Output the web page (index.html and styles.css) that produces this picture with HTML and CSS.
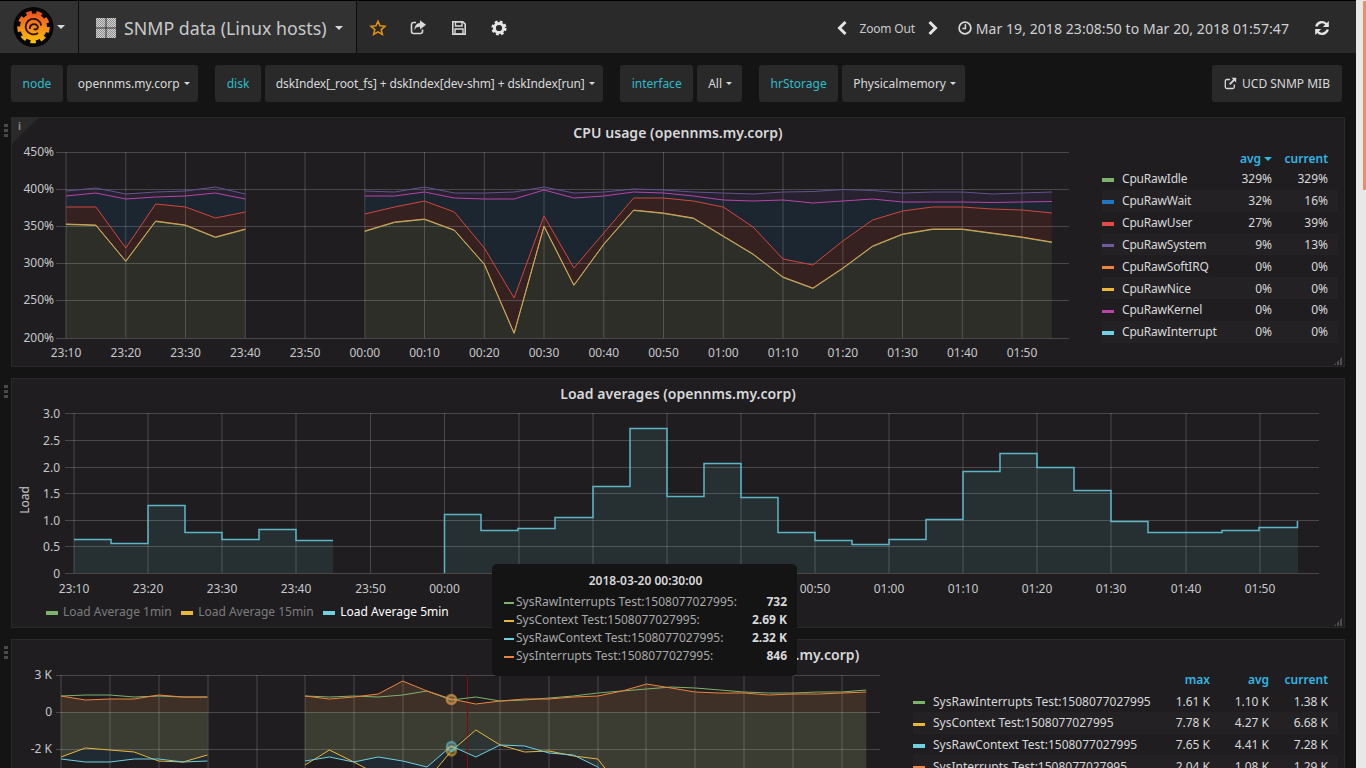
FILE: index.html
```html
<!DOCTYPE html>
<html lang="en">
<head>
<meta charset="utf-8">
<title>SNMP data (Linux hosts)</title>
<link rel="stylesheet" href="styles.css">
</head>
<body>
<div class="app">
<main class="main">
  <nav class="nav">
    <a class="nav-block logo-btn">
      <svg class="logo" width="42" height="42" viewBox="12 6 42 42">
        <defs><linearGradient id="lg" gradientUnits="userSpaceOnUse" x1="33" y1="11" x2="33" y2="43"><stop offset="0" stop-color="#ee4f22"/><stop offset="1" stop-color="#fcc30a"/></linearGradient></defs>
        <circle cx="33.500" cy="27" r="20" fill="#050505"/>
        <circle cx="33.500" cy="27" r="13.500" fill="url(#lg)"/>
        <circle cx="33.500" cy="27" r="14.500" fill="none" stroke="url(#lg)" stroke-width="3.500" stroke-dasharray="5.500 4.620"/>
        <path d="M38 33A7.800 7.800 0 1 1 41.200 25.500" fill="none" stroke="#2a1206" stroke-width="1.800"/>
        <path d="M29.800 29a4.300 4.300 0 0 1 7.800-3a2.400 2.400 0 0 1-3.800 2.800" fill="none" stroke="#2a1206" stroke-width="1.800"/>
      </svg>
      <span class="caret"></span>
    </a>
    <a class="nav-block title-btn">
      <svg class="grid-ico" width="20" height="20" viewBox="0 0 20 20">
        <defs><pattern id="hatch" width="2" height="2" patternUnits="userSpaceOnUse"><rect width="2" height="2" fill="#8f8f8f"/><path d="M0 2L2 0" stroke="#d8d8d8" stroke-width=".9"/></pattern></defs>
        <rect x="0" y="0" width="9.500" height="9.500" fill="url(#hatch)"/><rect x="10.500" y="0" width="9.500" height="9.500" fill="url(#hatch)"/><rect x="0" y="10.500" width="9.500" height="9.500" fill="url(#hatch)"/><rect x="10.500" y="10.500" width="9.500" height="9.500" fill="url(#hatch)"/>
      </svg>
      <span class="dash-title">SNMP data (Linux hosts)</span>
      <span class="caret"></span>
    </a>
    <a class="icon-btn"><svg class="star" width="18" height="18" viewBox="0 0 18 18"><path d="M9 2.200l2 4.600 5 .5-3.800 3.300 1.200 4.900L9 12.900l-4.400 2.600 1.200-4.900L2 7.300l5-.5z" fill="none" stroke="#e8920f" stroke-width="1.500" stroke-linejoin="miter"/></svg></a>
    <a class="icon-btn"><svg width="18" height="18" viewBox="0 0 18 18"><path d="M7 3.500H4.500A2 2 0 0 0 2.500 5.500v7a2 2 0 0 0 2 2h7a2 2 0 0 0 2-2v-2" fill="none" stroke="#d8d9da" stroke-width="1.600"/><path d="M11 1.200l6 4.600-6 4.600V7.800c-3 0-4.800 1-5.500 3.700C5.300 7 7.500 4 11 3.900z" fill="#d8d9da"/></svg></a>
    <a class="icon-btn"><svg width="18" height="18" viewBox="0 0 18 18"><path d="M2.800 2.800h10l2.400 2.400v10H2.800z" fill="none" stroke="#d8d9da" stroke-width="1.600"/><path d="M5.500 2.800h6.500v4.200H5.500z" fill="none" stroke="#d8d9da" stroke-width="1.400"/><path d="M5 10h8v5H5z" fill="none" stroke="#d8d9da" stroke-width="1.400"/></svg></a>
    <a class="icon-btn"><svg width="18" height="18" viewBox="0 0 18 18"><circle cx="9" cy="9" r="4.600" fill="none" stroke="#e6e6e6" stroke-width="3"/><circle cx="9" cy="9" r="6.400" fill="none" stroke="#e6e6e6" stroke-width="2.400" stroke-dasharray="2.800 2.230"/></svg></a>
    <div class="nav-right">
      <svg class="chev" width="12" height="16" viewBox="0 0 12 16"><path d="M9.500 2L3.500 8l6 6" fill="none" stroke="#e3e4e5" stroke-width="3"/></svg>
      <span class="zoom-out">Zoom Out</span>
      <svg class="chev" width="12" height="16" viewBox="0 0 12 16"><path d="M2.500 2l6 6-6 6" fill="none" stroke="#e3e4e5" stroke-width="3"/></svg>
      <svg class="clock" width="14" height="14" viewBox="0 0 14 14"><circle cx="7" cy="7" r="5.900" fill="none" stroke="#d8d9da" stroke-width="1.700"/><path d="M7.400 3.300V7.600H4.400" fill="none" stroke="#d8d9da" stroke-width="1.500"/></svg>
      <span class="range">Mar 19, 2018 23:08:50 to Mar 20, 2018 01:57:47</span>
      <svg class="refresh" width="16" height="16" viewBox="0 0 16 16"><path d="M2.300 6.500A5.900 5.900 0 0 1 12.500 4.200" fill="none" stroke="#e3e4e5" stroke-width="2.400"/><path d="M14.800 1v6h-6z" fill="#e3e4e5"/><path d="M13.700 9.500A5.900 5.900 0 0 1 3.500 11.800" fill="none" stroke="#e3e4e5" stroke-width="2.400"/><path d="M1.200 15V9h6z" fill="#e3e4e5"/></svg>
    </div>
  </nav>

  <div class="vars">
    <div class="var-group"><span class="var-label">node</span><span class="var-value">opennms.my.corp<i class="caret small"></i></span></div>
    <div class="var-group"><span class="var-label">disk</span><span class="var-value tight">dskIndex[_root_fs] + dskIndex[dev-shm] + dskIndex[run]<i class="caret small"></i></span></div>
    <div class="var-group"><span class="var-label">interface</span><span class="var-value roomy">All<i class="caret small"></i></span></div>
    <div class="var-group"><span class="var-label">hrStorage</span><span class="var-value roomy">Physicalmemory<i class="caret small"></i></span></div>
    <a class="var-link"><svg width="13" height="13" viewBox="0 0 13 13"><path d="M6 2.500H2.800A1.500 1.500 0 0 0 1.300 4v6a1.500 1.500 0 0 0 1.500 1.500h6A1.500 1.500 0 0 0 10.300 10V7.500" fill="none" stroke="#d8d9da" stroke-width="1.300"/><path d="M7.500 .8h4.700v4.700L10.500 3.800 6.300 8 5 6.700 9.200 2.500z" fill="#d8d9da"/></svg>UCD SNMP MIB</a>
  </div>

  <section class="panel">
    <i class="grip"></i><i class="info-corner"></i><i class="info-i">i</i>
    <h2 class="panel-title">CPU usage (opennms.my.corp)</h2>
    <div class="panel-body">
      <svg class="chart" width="1082" height="220" viewBox="12 146 1082 220">
        <g fill="#272130">
          <polygon points="66,191 95.900,188 125.800,194 155.600,192 185.500,191 215.400,187 245.300,194 245.300,338 66,338"/>
          <polygon points="364.800,191 394.600,192 424.500,187 454.400,193 484.300,193 514.100,192 544,187 573.900,193 603.800,192 633.600,189 663.500,190 693.400,192 723.300,193 753.100,194 783,192 812.900,191.500 842.800,189.500 872.600,190.500 902.500,193 932.400,192 962.300,192 992.100,194 1022,193 1051.900,192 1051.900,338 364.800,338"/>
        </g>
        <g fill="#1b2630">
          <polygon points="66,196 95.900,193 125.800,199 155.600,197 185.500,196 215.400,193 245.300,199 245.300,338 66,338"/>
          <polygon points="364.800,196 394.600,196 424.500,192 454.400,198 484.300,199 514.100,199 544,190 573.900,198 603.800,196 633.600,192 663.500,193 693.400,196 723.300,200 753.100,201 783,200 812.900,203 842.800,201 872.600,199 902.500,202 932.400,202 962.300,202 992.100,202.500 1022,202 1051.900,201.500 1051.900,338 364.800,338"/>
        </g>
        <g fill="#35211f">
          <polygon points="66,207 95.900,207 125.800,248 155.600,204 185.500,207 215.400,218 245.300,212 245.300,338 66,338"/>
          <polygon points="364.800,214 394.600,207 424.500,201 454.400,212 484.300,248 514.100,298 544,216 573.900,268 603.800,233 633.600,198 663.500,198 693.400,201 723.300,207 753.100,227 783,259 812.900,265 842.800,241 872.600,220 902.500,211 932.400,207 962.300,207 992.100,209 1022,210 1051.900,213 1051.900,338 364.800,338"/>
        </g>
        <g fill="#2c2e27">
          <polygon points="66,224 95.900,225 125.800,261 155.600,221 185.500,225 215.400,237 245.300,229 245.300,338 66,338"/>
          <polygon points="364.800,231 394.600,222 424.500,219 454.400,230 484.300,264 514.100,333 544,226 573.900,285 603.800,244 633.600,210 663.500,213 693.400,218 723.300,236 753.100,254 783,277 812.900,288 842.800,268 872.600,246 902.500,234 932.400,229 962.300,229 992.100,233 1022,237 1051.900,242 1051.900,338 364.800,338"/>
        </g>
        <path class="grid" d="M56 152.500H1069M56 189.500H1069M56 226.500H1069M56 263.500H1069M56 300.500H1069M56 338.500H1069M66 152V338M125.800 152V338M185.500 152V338M245.300 152V338M305 152V338M364.800 152V338M424.500 152V338M484.300 152V338M544 152V338M603.800 152V338M663.500 152V338M723.300 152V338M783 152V338M842.800 152V338M902.500 152V338M962.300 152V338M1022 152V338"/>
        <g class="line" stroke="#635390">
          <polyline points="66,191 95.900,188 125.800,194 155.600,192 185.500,191 215.400,187 245.300,194"/>
          <polyline points="364.800,191 394.600,192 424.500,187 454.400,193 484.300,193 514.100,192 544,187 573.900,193 603.800,192 633.600,189 663.500,190 693.400,192 723.300,193 753.100,194 783,192 812.900,191.500 842.800,189.500 872.600,190.500 902.500,193 932.400,192 962.300,192 992.100,194 1022,193 1051.900,192"/>
        </g>
        <g class="line" stroke="#ba43a9">
          <polyline points="66,196 95.900,193 125.800,199 155.600,197 185.500,196 215.400,193 245.300,199"/>
          <polyline points="364.800,196 394.600,196 424.500,192 454.400,198 484.300,199 514.100,199 544,190 573.900,198 603.800,196 633.600,192 663.500,193 693.400,196 723.300,200 753.100,201 783,200 812.900,203 842.800,201 872.600,199 902.500,202 932.400,202 962.300,202 992.100,202.500 1022,202 1051.900,201.500"/>
        </g>
        <g class="line" stroke="#d2473d">
          <polyline points="66,207 95.900,207 125.800,248 155.600,204 185.500,207 215.400,218 245.300,212"/>
          <polyline points="364.800,214 394.600,207 424.500,201 454.400,212 484.300,248 514.100,298 544,216 573.900,268 603.800,233 633.600,198 663.500,198 693.400,201 723.300,207 753.100,227 783,259 812.900,265 842.800,241 872.600,220 902.500,211 932.400,207 962.300,207 992.100,209 1022,210 1051.900,213"/>
        </g>
        <g class="line" stroke="#7eb26d">
          <polyline points="66,224.500 95.900,225.500 125.800,261.500 155.600,221.500 185.500,225.500 215.400,237.500 245.300,229.500"/>
          <polyline points="364.800,231.500 394.600,222.500 424.500,219.500 454.400,230.500 484.300,264.500 514.100,333.500 544,226.500 573.900,285.500 603.800,244.500 633.600,210.500 663.500,213.500 693.400,218.500 723.300,236.500 753.100,254.500 783,277.500 812.900,288.500 842.800,268.500 872.600,246.500 902.500,234.500 932.400,229.500 962.300,229.500 992.100,233.500 1022,237.500 1051.900,242.500"/>
        </g>
        <g class="line" stroke="#e39c50">
          <polyline points="66,224 95.900,225 125.800,261 155.600,221 185.500,225 215.400,237 245.300,229"/>
          <polyline points="364.800,231 394.600,222 424.500,219 454.400,230 484.300,264 514.100,333 544,226 573.900,285 603.800,244 633.600,210 663.500,213 693.400,218 723.300,236 753.100,254 783,277 812.900,288 842.800,268 872.600,246 902.500,234 932.400,229 962.300,229 992.100,233 1022,237 1051.900,242"/>
        </g>
        <g class="tick end">
          <text x="54" y="156">450%</text><text x="54" y="193">400%</text><text x="54" y="230">350%</text><text x="54" y="267">300%</text><text x="54" y="304">250%</text><text x="54" y="342">200%</text>
        </g>
        <g class="tick mid">
          <text x="66" y="357">23:10</text><text x="125.800" y="357">23:20</text><text x="185.500" y="357">23:30</text><text x="245.300" y="357">23:40</text><text x="305" y="357">23:50</text><text x="364.800" y="357">00:00</text><text x="424.500" y="357">00:10</text><text x="484.300" y="357">00:20</text><text x="544" y="357">00:30</text><text x="603.800" y="357">00:40</text><text x="663.500" y="357">00:50</text><text x="723.300" y="357">01:00</text><text x="783" y="357">01:10</text><text x="842.800" y="357">01:20</text><text x="902.500" y="357">01:30</text><text x="962.300" y="357">01:40</text><text x="1022" y="357">01:50</text>
        </g>
      </svg>
      <table class="legend legend-cpu">
        <thead><tr><th></th><th class="num">avg<i class="caret blue"></i></th><th class="num">current</th></tr></thead>
        <tbody>
          <tr><td><i class="dash c-green"></i>CpuRawIdle</td><td class="num">329%</td><td class="num">329%</td></tr>
          <tr><td><i class="dash c-blue"></i>CpuRawWait</td><td class="num">32%</td><td class="num">16%</td></tr>
          <tr><td><i class="dash c-red"></i>CpuRawUser</td><td class="num">27%</td><td class="num">39%</td></tr>
          <tr><td><i class="dash c-purple"></i>CpuRawSystem</td><td class="num">9%</td><td class="num">13%</td></tr>
          <tr><td><i class="dash c-orange"></i>CpuRawSoftIRQ</td><td class="num">0%</td><td class="num">0%</td></tr>
          <tr><td><i class="dash c-yellow"></i>CpuRawNice</td><td class="num">0%</td><td class="num">0%</td></tr>
          <tr><td><i class="dash c-magenta"></i>CpuRawKernel</td><td class="num">0%</td><td class="num">0%</td></tr>
          <tr><td><i class="dash c-cyan"></i>CpuRawInterrupt</td><td class="num">0%</td><td class="num">0%</td></tr>
        </tbody>
      </table>
    </div>
    <i class="resize"></i>
  </section>

  <section class="panel">
    <i class="grip"></i>
    <h2 class="panel-title">Load averages (opennms.my.corp)</h2>
    <svg class="chart" width="1332" height="190" viewBox="12 407 1332 190">
      <path fill="#263033" d="M74 539H111V543H148V505H185V532H222V539H259V529H296V540H333V573H74Z"/>
      <path fill="#263033" d="M444 573V514H481V530H518V528H555V517H593V486H630V428H667V496H704V463H741V497H778V532H815V540H852V544H889V539H926V519H963V471H1000V453H1037V467H1074V490H1111V521H1148V532H1222V530H1259V527H1296V521H1298V573Z"/>
      <path class="grid" d="M65 413.500H1319M65 440.500H1319M65 467.500H1319M65 493.500H1319M65 520.500H1319M65 546.500H1319M65 573.500H1319M74 413V573M148 413V573M222 413V573M296 413V573M370.500 413V573M444.500 413V573M519 413V573M593 413V573M667 413V573M741 413V573M815 413V573M889 413V573M963 413V573M1037 413V573M1111 413V573M1186 413V573M1260 413V573"/>
      <path class="line step" d="M74 539.500H111V543.500H148V505.500H185V532.500H222V539.500H259V529.500H296V540.500H333"/>
      <path class="line step" d="M444.500 573V514.500H481V530.500H518V528.500H555V517.500H593V486.500H630V428.500H667V496.500H704V463.500H741V497.500H778V532.500H815V540.500H852V544.500H889V539.500H926V519.500H963V471.500H1000V453.500H1037V467.500H1074V490.500H1111V521.500H1148V532.500H1222V530.500H1259V527.500H1297.500V521"/>
      <g class="tick end">
        <text x="60" y="418">3.0</text><text x="60" y="445">2.5</text><text x="60" y="472">2.0</text><text x="60" y="498">1.5</text><text x="60" y="525">1.0</text><text x="60" y="551">0.5</text><text x="60" y="578">0</text>
      </g>
      <g class="tick mid">
        <text x="74" y="593">23:10</text><text x="148" y="593">23:20</text><text x="222" y="593">23:30</text><text x="296" y="593">23:40</text><text x="370.500" y="593">23:50</text><text x="444.500" y="593">00:00</text><text x="815" y="593">00:50</text><text x="889" y="593">01:00</text><text x="963" y="593">01:10</text><text x="1037" y="593">01:20</text><text x="1111" y="593">01:30</text><text x="1186" y="593">01:40</text><text x="1260" y="593">01:50</text>
      </g>
      <text class="tick mid" transform="translate(29 500) rotate(-90)">Load</text>
    </svg>
    <div class="legend-row">
      <span class="legend-item dim"><i class="dash c-green"></i>Load Average 1min</span>
      <span class="legend-item dim"><i class="dash c-yellow"></i>Load Average 15min</span>
      <span class="legend-item"><i class="dash c-cyan"></i>Load Average 5min</span>
    </div>
    <i class="resize"></i>
  </section>

  <section class="panel">
    <i class="grip"></i>
    <h2 class="panel-title">Interrupts and context switching (opennms.my.corp)</h2>
    <div class="panel-body">
      <svg class="chart" width="882" height="220" viewBox="12 668 882 220">
        <g fill="#3e3026">
          <polygon points="61,696 85.400,700 109.800,699 134.200,699 158.600,695 183,697 207.400,697 207.400,712 61,712"/>
          <polygon points="305,696 329.400,699 353.800,697 378.200,694 402.600,681 427,691 451.400,699 475.800,704 500.200,701 524.600,699 549,699 573.400,697 597.800,696 622.200,691 646.600,684 671,688 695.400,692 719.800,693 744.200,693 768.600,695 793,694 817.400,694 841.800,693 866.200,692 866.200,712 305,712"/>
        </g>
        <g fill="#1f2a33">
          <polygon points="61,712 207.400,712 207.400,761 183,762 158.600,759 134.200,759 109.800,762 85.400,762 61,759"/>
          <polygon points="305,712 866.200,712 866.200,800 622.200,800 597.800,759 573.400,756 549,751 524.600,752 500.200,745 475.800,730 451.400,751 427,780 402.600,780 378.200,775 353.800,762 329.400,750 305,765"/>
        </g>
        <g fill="#2c3534">
          <polygon points="305,712 866.200,712 866.200,800 622.200,800 597.800,767 573.400,755 549,753 524.600,746 500.200,745 475.800,757 451.400,746 427,767 402.600,761 378.200,757 353.800,762 329.400,757 305,761"/>
        </g>
        <g fill="#3b3d33">
          <polygon points="61,712 207.400,712 207.400,755 183,762 158.600,759 134.200,752 109.800,750 85.400,748 61,757"/>
          <polygon points="305,712 866.200,712 866.200,800 622.200,800 597.800,759 573.400,755 549,751 524.600,746 500.200,745 475.800,730 451.400,746 427,767 402.600,761 378.200,757 353.800,762 329.400,750 305,761"/>
        </g>
        <path class="grid" d="M56 675.500H880M56 712.500H880M56 749.500H880M61 675V768M110 675V768M159 675V768M208 675V768M257 675V768M305 675V768M354 675V768M403 675V768M452 675V768M500 675V768M549 675V768M598 675V768M646 675V768M695 675V768M744 675V768M793 675V768M842 675V768"/>
        <path d="M467.500 675V768" stroke="#6e1414" stroke-width="1.200" fill="none"/>
        <g class="line" stroke="#7eb26d">
          <polyline points="61,696 85.400,695 109.800,695 134.200,697 158.600,696 183,697 207.400,697"/>
          <polyline points="305,696 329.400,697 353.800,696 378.200,697 402.600,695 427,691 451.400,700 475.800,697 500.200,701 524.600,700 549,698 573.400,696 597.800,693 622.200,691 646.600,689 671,687 695.400,688 719.800,690 744.200,692 768.600,693 793,693 817.400,692 841.800,692 866.200,690"/>
        </g>
        <g class="line" stroke="#ef843c">
          <polyline points="61,696 85.400,700 109.800,699 134.200,699 158.600,695 183,697 207.400,697"/>
          <polyline points="305,696 329.400,699 353.800,697 378.200,694 402.600,681 427,691 451.400,699 475.800,704 500.200,701 524.600,699 549,699 573.400,697 597.800,696 622.200,691 646.600,684 671,688 695.400,692 719.800,693 744.200,693 768.600,695 793,694 817.400,694 841.800,693 866.200,692"/>
        </g>
        <g class="line" stroke="#eab839">
          <polyline points="61,757 85.400,748 109.800,750 134.200,752 158.600,761 183,762 207.400,755"/>
          <polyline points="305,765 329.400,750 353.800,762 378.200,775 402.600,780 427,780 451.400,751 475.800,730 500.200,745 524.600,752 549,751 573.400,756 597.800,759 622.200,790"/>
        </g>
        <g class="line" stroke="#6ed0e0">
          <polyline points="61,759 85.400,762 109.800,762 134.200,759 158.600,759 183,762 207.400,761"/>
          <polyline points="305,761 329.400,757 353.800,762 378.200,757 402.600,761 427,767 451.400,746 475.800,757 500.200,745 524.600,746 549,753 573.400,755 597.800,767 622.200,790"/>
        </g>
        <circle class="mark" cx="451.400" cy="699.500" r="4.500" fill="#7eb26d" stroke="#7eb26d"/>
        <circle class="mark" cx="451.400" cy="699.500" r="4.500" fill="#ef843c" stroke="#ef843c"/>
        <circle class="mark" cx="451.400" cy="751" r="4.500" fill="#eab839" stroke="#eab839"/>
        <circle class="mark" cx="451.400" cy="746.500" r="4.500" fill="#6ed0e0" stroke="#6ed0e0"/>
        <g class="tick end">
          <text x="52" y="679">3 K</text><text x="52" y="716">0</text><text x="52" y="753">-2 K</text>
        </g>
      </svg>
      <table class="legend legend-sys">
        <thead><tr><th></th><th class="num">max</th><th class="num">avg</th><th class="num">current</th></tr></thead>
        <tbody>
          <tr><td><i class="dash c-green"></i>SysRawInterrupts Test:1508077027995</td><td class="num">1.61 K</td><td class="num">1.10 K</td><td class="num">1.38 K</td></tr>
          <tr><td><i class="dash c-yellow"></i>SysContext Test:1508077027995</td><td class="num">7.78 K</td><td class="num">4.27 K</td><td class="num">6.68 K</td></tr>
          <tr><td><i class="dash c-cyan"></i>SysRawContext Test:1508077027995</td><td class="num">7.65 K</td><td class="num">4.41 K</td><td class="num">7.28 K</td></tr>
          <tr><td><i class="dash c-orange"></i>SysInterrupts Test:1508077027995</td><td class="num">2.04 K</td><td class="num">1.08 K</td><td class="num">1.29 K</td></tr>
        </tbody>
      </table>
    </div>
  </section>

  <div class="tooltip">
    <div class="tt-title">2018-03-20 00:30:00</div>
    <div class="tt-row"><span><i class="tt-dash c-green"></i>SysRawInterrupts Test:1508077027995:</span><b>732</b></div>
    <div class="tt-row"><span><i class="tt-dash c-yellow"></i>SysContext Test:1508077027995:</span><b>2.69 K</b></div>
    <div class="tt-row"><span><i class="tt-dash c-cyan"></i>SysRawContext Test:1508077027995:</span><b>2.32 K</b></div>
    <div class="tt-row"><span><i class="tt-dash c-orange"></i>SysInterrupts Test:1508077027995:</span><b>846</b></div>
  </div>
</main>
<aside class="scrollbar"><div class="thumb"></div></aside>
</div>
</body>
</html>
```
FILE: styles.css
```css
* { box-sizing: border-box; }
html, body { margin: 0; padding: 0; height: 100%; overflow: hidden; background: #141414; }
body { font-family: "Noto Sans", "Open Sans", sans-serif; font-size: 12px; color: #d8d9da; }
.app { display: flex; width: 1366px; height: 768px; }
.main { position: relative; width: 1356px; height: 768px; overflow: hidden; background: #141414; }
.scrollbar { width: 10px; height: 768px; background: #e8e8e8; }
.thumb { width: 3px; height: 189px; margin: 1px 0 0 7px; background: #f18d63; }

.nav { display: flex; align-items: center; height: 53px; border-top: 1px solid #000; background: #2a2a2a; }
.nav-block { display: flex; align-items: center; height: 52px; background: #323232; border-right: 1px solid #0c0c0c; }
.logo-btn { width: 79px; padding-left: 12px; }
.logo { flex: none; }
.logo-btn .caret { margin-left: 3px; border-top-color: #d8d9da; }
.title-btn { width: 278px; padding: 2px 0 0 17px; }
.grid-ico { flex: none; margin-right: 8px; }
.dash-title { font-size: 17.800px; color: #c8c9ca; white-space: nowrap; }
.title-btn .caret { margin-left: 8px; }
.caret { display: inline-block; width: 0; height: 0; border-style: solid; border-width: 4px 4px 0; border-color: #d8d9da transparent transparent; vertical-align: middle; }
.caret.small { margin-left: 4px; border-width: 3.500px 3.500px 0; }
.caret.blue { margin-left: 3px; border-top-color: #33b5e5; }
.icon-btn { display: flex; justify-content: center; align-items: center; width: 40.700px; height: 52px; padding-top: 2px; }
.star { margin-left: 2px; }
.nav-right { display: flex; align-items: center; height: 52px; margin-left: auto; padding: 2px 26px 0 0; }
.zoom-out { margin: 0 12px 0 12px; font-size: 12px; letter-spacing: -.2px; color: #c8c9ca; }
.clock { margin-left: 19px; margin-right: 4px; }
.range { font-size: 14px; letter-spacing: .07px; color: #d0d1d2; white-space: nowrap; }
.refresh { margin-left: 25px; }

.vars { display: flex; gap: 17.500px; height: 37px; margin: 12px 14px 15px 11px; }
.var-group { display: flex; gap: 4px; }
.var-label, .var-value, .var-link { display: flex; align-items: center; height: 37px; background: #292929; border-radius: 3px; white-space: nowrap; }
.var-label { padding: 0 11.500px; color: #2fbcc8; }
.var-value { padding: 0 8px 0 11px; color: #d8d9da; }
.var-value.tight { letter-spacing: -.13px; }
.var-value.roomy { padding-right: 9.500px; }
.var-link { gap: 5px; margin-left: auto; color: #d8d9da; padding: 0 12px; }

.panel { position: relative; width: 1334px; height: 250px; margin: 0 0 11px 11px; background: #1f1d1f; border: 1px solid #292929; }
.panel-title { margin: 0; height: 28px; padding-top: 5px; font-size: 14px; letter-spacing: .05px; line-height: 20px; font-weight: 600; text-align: center; color: #d8d9da; }
.panel-body { display: flex; }
.chart { display: block; flex: none; }
.grid { fill: none; stroke: rgba(255,255,255,.19); stroke-width: 1; }
.line { fill: none; stroke-width: 1; }
.step { stroke: #5cb6c6; stroke-width: 1.500; }
.mark { fill-opacity: .25; stroke-width: 2.500; stroke-opacity: .5; }
.tick text, text.tick { font-family: "Noto Sans", "Open Sans", sans-serif; font-size: 12px; fill: #c6c8ca; }
.end text { text-anchor: end; }
.mid text, text.mid { text-anchor: middle; }

.grip { position: absolute; left: -8px; top: 6px; width: 4px; height: 14px; background: repeating-linear-gradient(#4a4a4a 0 3px, transparent 3px 5px); }
.info-corner { position: absolute; left: 0; top: 0; width: 0; height: 0; border-style: solid; border-width: 26px 26px 0 0; border-color: #2a2a2a transparent transparent transparent; }
.info-i { position: absolute; left: 6px; top: 1px; font-size: 10px; line-height: 14px; font-style: normal; font-weight: 700; color: #8a8a8a; }
.resize { position: absolute; right: 1px; bottom: 1px; width: 9px; height: 9px; background: repeating-linear-gradient(90deg, #4e4e4e 0 2px, transparent 2px 3px); clip-path: polygon(100% 0, 100% 100%, 0 100%); }

.legend { flex: none; border-collapse: collapse; border-spacing: 0; align-self: flex-start; margin-top: 1px; }
.legend th { padding: 0; font-weight: 600; color: #33b5e5; text-align: right; }
.legend td { padding: 0; white-space: nowrap; color: #d8d9da; }
.legend tbody tr:nth-child(even) { background: #232123; }
.legend .num { text-align: right; padding-right: 10px; }
.legend-cpu { width: 236px; margin-top: 2px; margin-left: 8px; }
.legend-cpu tr { height: 21.850px; }
.legend-cpu thead tr { height: 20px; }
.legend-cpu td { padding-bottom: 0; }
.legend-cpu td:first-child { letter-spacing: -.2px; }
.legend-cpu td:nth-child(2), .legend-cpu th:nth-child(2) { width: 60px; }
.legend-cpu td:nth-child(3), .legend-cpu th:nth-child(3) { width: 56px; }
.legend-sys { width: 425px; margin-left: 19px; }
.legend-sys tr { height: 21.600px; }
.legend-sys td:nth-child(2), .legend-sys th:nth-child(2) { width: 60px; }
.legend-sys td:nth-child(3), .legend-sys th:nth-child(3) { width: 59px; }
.legend-sys td:nth-child(4), .legend-sys th:nth-child(4) { width: 59px; }

.dash { display: inline-block; width: 12px; height: 3.500px; margin-right: 8px; vertical-align: middle; }
.tt-dash { display: inline-block; width: 10px; height: 2.500px; margin-right: 2px; vertical-align: middle; }
.c-green { background: #7eb26d; }
.c-blue { background: #1f78c1; }
.c-red { background: #e24d42; }
.c-purple { background: #705da0; }
.c-orange { background: #ef843c; }
.c-yellow { background: #eab839; }
.c-magenta { background: #ba43a9; }
.c-cyan { background: #6ed0e0; }

.legend-row { display: flex; gap: 9.500px; height: 29px; padding: 6px 0 0 34px; line-height: 18px; }
.legend-item { white-space: nowrap; color: #fff; }
.legend-item .dash { margin-right: 5px; }
.legend-item.dim { color: #7c7d7e; }

.tooltip { position: absolute; left: 492px; top: 564px; width: 305px; height: 112px; padding: 8px 10px 0 12px; background: #141414; border-radius: 5px; color: #a8a9aa; }
.tt-title { height: 21px; line-height: 18px; font-weight: 600; text-align: center; color: #d8d9da; }
.tt-row { display: flex; justify-content: space-between; height: 18px; line-height: 18px; white-space: nowrap; }
.tt-row b { font-weight: 700; color: #d8d9da; }
```
